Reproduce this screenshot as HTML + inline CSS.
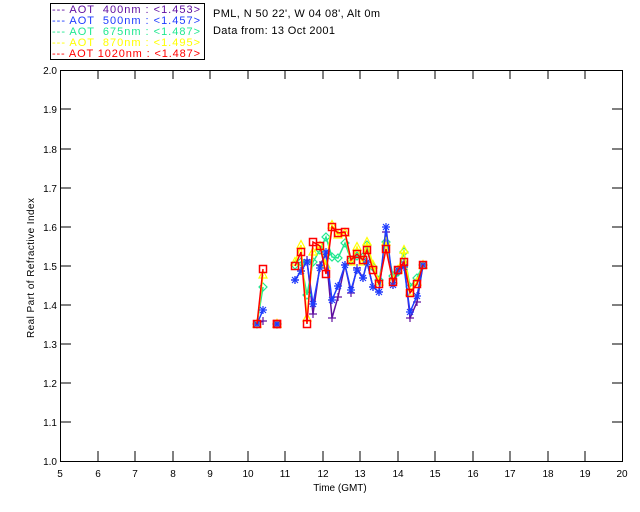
<!DOCTYPE html>
<html><head><style>
html,body{margin:0;padding:0;background:#fff;}
svg{display:block;font-family:"Liberation Sans",sans-serif;}
</style></head><body>
<svg width="640" height="512" viewBox="0 0 640 512" xmlns="http://www.w3.org/2000/svg">
<defs>
<marker id="sq" markerUnits="userSpaceOnUse" markerWidth="12" markerHeight="12" refX="6" refY="6"><rect x="2.5" y="2.5" width="7" height="7" fill="none" stroke="#f00" stroke-width="1.5"/></marker>
<marker id="st" markerUnits="userSpaceOnUse" markerWidth="12" markerHeight="12" refX="6" refY="6"><path d="M6 2V10M2 6H10M3 3L9 9M9 3L3 9" stroke="#1e3cff" stroke-width="1.2"/></marker>
<marker id="pl" markerUnits="userSpaceOnUse" markerWidth="12" markerHeight="12" refX="6" refY="6"><path d="M6 2V10M2 6H10" stroke="#6010a0" stroke-width="1.2"/></marker>
<marker id="tr" markerUnits="userSpaceOnUse" markerWidth="12" markerHeight="12" refX="6" refY="6"><path d="M6 1.5L10 9H2Z" fill="none" stroke="#ff0" stroke-width="1.2"/></marker>
<marker id="di" markerUnits="userSpaceOnUse" markerWidth="12" markerHeight="12" refX="6" refY="6"><path d="M6 2L10 6L6 10L2 6Z" fill="none" stroke="#20e890" stroke-width="1.2"/></marker>
</defs>
<!-- legend -->
<rect x="50.5" y="3.5" width="154" height="56" fill="none" stroke="#000"/>
<g font-size="11">
<text x="52" y="13" fill="#6010a0" textLength="148" xml:space="preserve">--- AOT  400nm : &lt;1.453&gt;</text>
<text x="52" y="24" fill="#1e3cff" textLength="148" xml:space="preserve">--- AOT  500nm : &lt;1.457&gt;</text>
<text x="52" y="35" fill="#20e890" textLength="148" xml:space="preserve">--- AOT  675nm : &lt;1.487&gt;</text>
<text x="52" y="46" fill="#ff0" textLength="148" xml:space="preserve">--- AOT  870nm : &lt;1.495&gt;</text>
<text x="52" y="57" fill="#f00" textLength="148" xml:space="preserve">--- AOT 1020nm : &lt;1.487&gt;</text>
<text x="213" y="17" fill="#000" textLength="167">PML, N 50 22', W 04 08', Alt 0m</text>
<text x="213" y="34" fill="#000" textLength="122">Data from: 13 Oct 2001</text>
</g>
<!-- axes -->
<rect x="60.5" y="70.5" width="562" height="391" fill="none" stroke="#000"/>
<g stroke="#000">
<path d="M98 461v-10M135 461v-10M173 461v-10M210 461v-10M248 461v-10M285 461v-10M323 461v-10M360 461v-10M398 461v-10M435 461v-10M473 461v-10M510 461v-10M548 461v-10M585 461v-10"/>
<path d="M98 71v8M135 71v8M173 71v8M210 71v8M248 71v8M285 71v8M323 71v8M360 71v8M398 71v8M435 71v8M473 71v8M510 71v8M548 71v8M585 71v8"/>
<path d="M61 422h10M61 383h10M61 344h10M61 305h10M61 266h10M61 227h10M61 188h10M61 149h10M61 109h10"/>
<path d="M622 422h-10M622 383h-10M622 344h-10M622 305h-10M622 266h-10M622 227h-10M622 188h-10M622 149h-10M622 109h-10"/>
</g>
<g font-size="10" fill="#000" text-anchor="end">
<text x="57" y="465">1.0</text><text x="57" y="426">1.1</text><text x="57" y="387">1.2</text><text x="57" y="348">1.3</text><text x="57" y="309">1.4</text><text x="57" y="270">1.5</text><text x="57" y="231">1.6</text><text x="57" y="192">1.7</text><text x="57" y="153">1.8</text><text x="57" y="113">1.9</text><text x="57" y="74">2.0</text>
</g>
<g font-size="10" fill="#000" text-anchor="middle">
<text x="60" y="477">5</text><text x="98" y="477">6</text><text x="135" y="477">7</text><text x="173" y="477">8</text><text x="210" y="477">9</text><text x="248" y="477">10</text><text x="285" y="477">11</text><text x="323" y="477">12</text><text x="360" y="477">13</text><text x="398" y="477">14</text><text x="435" y="477">15</text><text x="473" y="477">16</text><text x="510" y="477">17</text><text x="548" y="477">18</text><text x="585" y="477">19</text><text x="622" y="477">20</text>
<text x="340" y="491">Time (GMT)</text>
<text transform="translate(34,268) rotate(-90)" textLength="140">Real Part of Refractive Index</text>
</g>
<!-- data -->
<g fill="none" stroke-width="1.5">
<g stroke="#6010a0" marker-start="url(#pl)" marker-mid="url(#pl)" marker-end="url(#pl)">
<polyline points="257,324 263,321"/><polyline points="277,324 277,324"/>
<polyline points="295,280 301,271 307,260 313,314 320,265 326,254 332,318 338,297 345,265 351,293 357,268 363,278 367,262 373,287 379,292 386,232 393,285 398,272 404,262 410,318 417,302 423,265"/>
</g>
<g stroke="#20e890" marker-start="url(#di)" marker-mid="url(#di)" marker-end="url(#di)">
<polyline points="257,324 263,287"/><polyline points="277,324 277,324"/>
<polyline points="295,265 301,262 307,295 313,262 320,250 326,237 332,257 338,258 345,243 351,260 357,256 363,257 367,245 373,267 379,280 386,242 393,276 398,272 404,252 410,287 417,278 423,265"/>
</g>
<g stroke="#ff0" marker-start="url(#tr)" marker-mid="url(#tr)" marker-end="url(#tr)">
<polyline points="257,324 263,275"/><polyline points="277,324 277,324"/>
<polyline points="295,262 301,245 307,318 313,252 320,246 326,265 332,225 338,235 345,233 351,262 357,247 363,262 367,242 373,265 379,282 386,242 393,280 398,270 404,250 410,292 417,282 423,265"/>
</g>
<g stroke="#1e3cff" marker-start="url(#st)" marker-mid="url(#st)" marker-end="url(#st)">
<polyline points="257,324 263,310"/><polyline points="277,324 277,324"/>
<polyline points="295,280 301,271 307,262 313,304 320,268 326,252 332,300 338,286 345,265 351,290 357,270 363,278 367,262 373,287 379,292 386,227 393,285 398,270 404,267 410,312 417,296 423,265"/>
</g>
<g stroke="#f00" marker-start="url(#sq)" marker-mid="url(#sq)" marker-end="url(#sq)">
<polyline points="257,324 263,269"/><polyline points="277,324 277,324"/>
<polyline points="295,266 301,252 307,324 313,242 320,246 326,274 332,227 338,233 345,232 351,260 357,254 363,260 367,250 373,270 379,284 386,249 393,282 398,270 404,262 410,293 417,284 423,265"/>
</g>
</g>
</svg>
</body></html>
